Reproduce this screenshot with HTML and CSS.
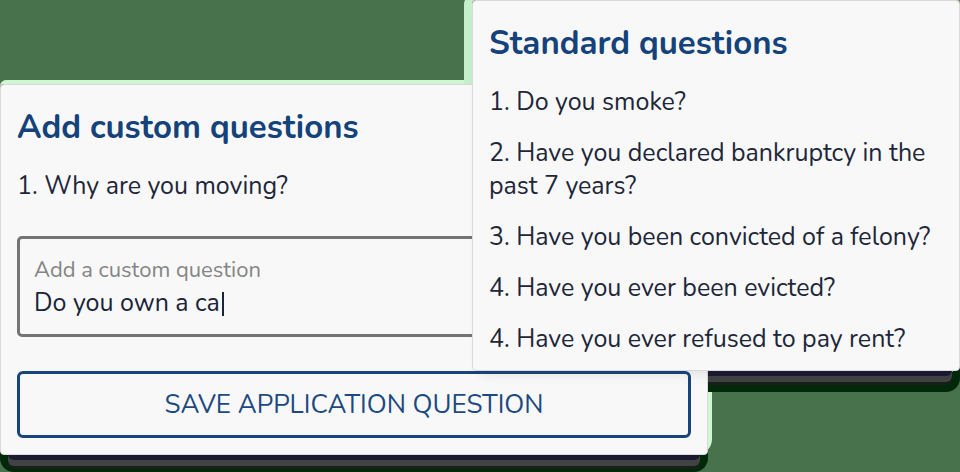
FILE: index.html
```html
<!DOCTYPE html>
<html lang="en">
<head>
<meta charset="utf-8">
<meta name="viewport" content="width=device-width, initial-scale=1">
<title>Application questions</title>
<link rel="stylesheet" href="styles.css">
</head>
<body>
<main class="stage">
  <div class="backing backing-custom"></div>
  <div class="backing backing-standard"></div>
  <form class="card card-custom">
    <h2>Add custom questions</h2>
    <p>1. Why are you moving?</p>
    <div class="field">
      <label for="question">Add a custom question</label>
      <div class="entry">
        <input id="question" type="text" value="Do you own a ca" autocomplete="off" spellcheck="false">
        <span class="caret"></span>
      </div>
    </div>
    <button type="button">SAVE APPLICATION QUESTION</button>
  </form>
  <section class="card card-standard">
    <h2>Standard questions</h2>
    <p>1. Do you smoke?</p>
    <p>2. Have you declared bankruptcy in the past 7 years?</p>
    <p>3. Have you been convicted of a felony?</p>
    <p>4. Have you ever been evicted?</p>
    <p>4. Have you ever refused to pay rent?</p>
  </section>
</main>
</body>
</html>
```
FILE: styles.css
```css
* { box-sizing: border-box; }

body {
  margin: 0;
  background: #48724b;
  color: #202638;
  font: 25px/33px Nunito, Lato, sans-serif;
}

.stage {
  display: grid;
  grid-template-columns: 472fr 236fr 252fr;
  align-items: start;
  padding-bottom: 17px;
  overflow: hidden;
}

.card, .backing { grid-row: 1; border-radius: 4px; }

.card-custom, .backing-custom { grid-column: 1 / 3; margin-top: 84px; }

.card-standard, .backing-standard { grid-column: 2 / 4; }

.card {
  display: flex;
  flex-direction: column;
  gap: 18px;
  padding: 18px 16px 14px;
  border: 1px solid #d9d9da;
  background: #f8f8f8;
}

.card-custom { z-index: 1; padding-bottom: 16px; }

.card-standard {
  z-index: 2;
  box-shadow: 0 10px 12px -8px rgba(30, 30, 60, 0.12);
}

/* Hard-edged shadows sit on separate layers so neither card is covered. */
.backing { align-self: stretch; border-radius: 4px 4px 14px 14px; }

.backing-custom {
  box-shadow:
    0 13px 0 -8px #1b1a30,
    0 19px 0 -8px #414242,
    0 22px 0 -8px #182019,
    2px -2px 0 2px #cff7d3,
    0 17px 0 0 #00290a;
}

.backing-standard {
  margin-bottom: 84px;
  border-bottom-right-radius: 14px;
  box-shadow:
    0 13px 0 -8px #1b1a30,
    0 19px 0 -8px #414242,
    0 22px 0 -8px #182019,
    -4px 0 0 4px #c5efca,
    0 21px 0 0 #00290a;
}

h2 {
  margin: 0;
  color: #14427a;
  font-size: 33px;
  line-height: 49px;
}

p { margin: 0; }

.field {
  margin: 15px 0 16px;
  padding: 15px 14px 14px;
  border: 3px solid #747474;
  border-radius: 5px;
}

.field label {
  display: block;
  color: #858585;
  font-size: 22px;
}

.entry { display: flex; align-items: center; gap: 2px; }

.entry input {
  field-sizing: content;
  padding: 0;
  border: 0;
  outline: 0;
  background: none;
  color: #182438;
  font: inherit;
}

.caret { width: 2px; height: 24px; background: #182438; }

button {
  padding: 14px;
  border: 3px solid #16457b;
  border-radius: 6px;
  background: transparent;
  color: #1c4a80;
  font: inherit;
  font-size: 26px;
  line-height: 33px;
}
```
